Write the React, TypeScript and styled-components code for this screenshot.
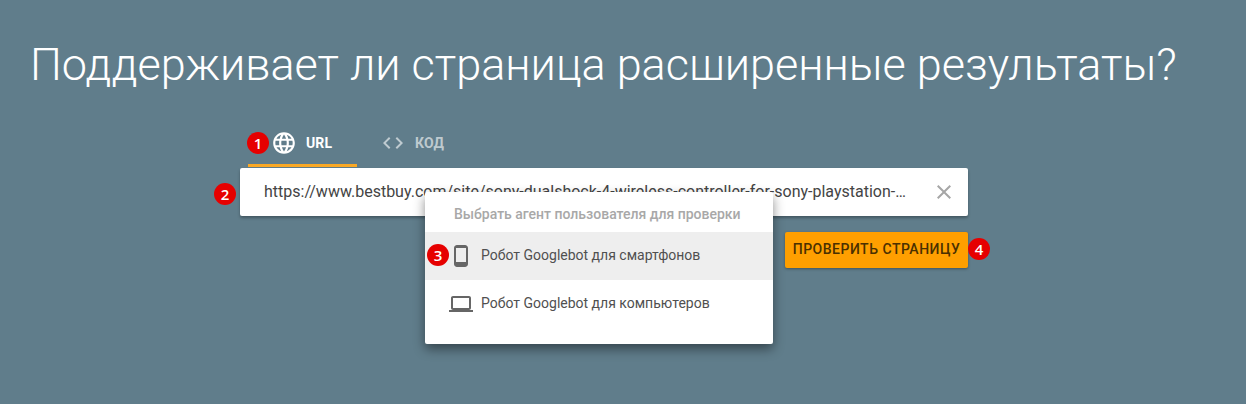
import styled, { createGlobalStyle } from 'styled-components'

const GlobalStyle = createGlobalStyle`
  html, body {
    margin: 0;
    padding: 0;
    background: #607d8b;
    font-family: Roboto, "Liberation Sans", sans-serif;
    overflow: hidden;
  }
`

const Page = styled.div`
  width: 1246px;
  height: 404px;
  background: #607d8b;
  overflow: hidden;
`

const Title = styled.h1`
  margin: 0;
  padding: 37px 0 0 30px;
  font-size: 45px;
  line-height: 56px;
  height: 56px;
  font-weight: 300;
  color: #fff;
  white-space: nowrap;
`

const Form = styled.div`
  position: relative;
  width: 728px;
  margin: 27px 0 0 240px;
`

const Tabs = styled.div`
  display: flex;
  height: 48px;
  padding-left: 8px;
`

const Tab = styled.div<{ $active?: boolean }>`
  display: flex;
  align-items: center;
  gap: ${p => (p.$active ? '9px' : '10px')};
  height: 47px;
  box-sizing: border-box;
  width: 109px;
  padding: 1px 0 0 ${p => (p.$active ? '23px' : '24px')};
  color: ${p => (p.$active ? '#fff' : 'rgba(255,255,255,0.6)')};
  border-bottom: ${p => (p.$active ? '3px solid #f9a825' : '3px solid transparent')};
  font-size: 14px;
  font-weight: 700;
  letter-spacing: 0.1px;
`

const Field = styled.div`
  display: flex;
  align-items: center;
  height: 48px;
  padding: 0 12px 0 24px;
  background: #fff;
  border-radius: 2px;
  box-shadow: 0 2px 3px rgba(0, 0, 0, 0.3);
`

const UrlText = styled.div`
  width: 644px;
  padding-bottom: 1px;
  font-size: 16px;
  color: #444;
  white-space: nowrap;
  overflow: hidden;
  text-overflow: ellipsis;
`

const ClearButton = styled.div`
  display: flex;
  margin-left: auto;
  color: #a6a6a6;
`

const Actions = styled.div`
  display: flex;
  justify-content: flex-end;
  margin-top: 16px;
`

const SubmitButton = styled.div`
  display: flex;
  align-items: center;
  justify-content: center;
  width: 183px;
  height: 36px;
  padding-bottom: 2px;
  box-sizing: border-box;
  background: #ff9f00;
  color: #4a3000;
  border-radius: 2px;
  font-size: 14px;
  font-weight: 500;
  letter-spacing: 0.5px;
  box-shadow: 0 1px 3px rgba(0, 0, 0, 0.35);
`

const Menu = styled.div`
  position: absolute;
  left: 185px;
  top: 72px;
  width: 348px;
  height: 152px;
  padding-bottom: 16px;
  box-sizing: border-box;
  background: #fff;
  border-radius: 2px;
  box-shadow: 0 5px 12px rgba(0, 0, 0, 0.45);
`

const MenuHeader = styled.div`
  height: 40px;
  padding: 14px 0 0 29px;
  box-sizing: border-box;
  font-size: 14px;
  line-height: 16px;
  font-weight: 500;
  color: #a8a8a8;
`

const MenuItem = styled.div<{ $selected?: boolean }>`
  display: flex;
  align-items: center;
  height: 48px;
  padding-left: 24px;
  gap: 8px;
  background: ${p => (p.$selected ? '#eeeeee' : 'transparent')};
  font-size: 14px;
  color: #505050;
`

const MenuLabel = styled.span`
  padding-bottom: 2px;
`

const MenuIcon = styled.div`
  display: flex;
  justify-content: center;
  width: 24px;
  color: #666;
`

const Badge = styled.div<{ $left: number; $top: number }>`
  position: absolute;
  left: ${p => p.$left}px;
  top: ${p => p.$top}px;
  display: flex;
  align-items: center;
  justify-content: center;
  width: 22px;
  height: 22px;
  border-radius: 50%;
  background: #e60000;
  color: #fff;
  font-family: "Open Sans", Roboto, sans-serif;
  font-size: 15px;
  font-weight: 600;
`

const GlobeIcon = () => (
  <svg width="26" height="26" viewBox="0 0 24 24" fill="currentColor">
    <path d="M11.99 2C6.47 2 2 6.48 2 12s4.47 10 9.99 10C17.52 22 22 17.52 22 12S17.52 2 11.99 2zm6.93 6h-2.95c-.32-1.25-.78-2.45-1.38-3.56 1.84.63 3.37 1.91 4.33 3.56zM12 4.04c.83 1.2 1.48 2.53 1.91 3.96h-3.82c.43-1.43 1.08-2.76 1.91-3.96zM4.26 14C4.1 13.36 4 12.69 4 12s.1-1.36.26-2h3.38c-.08.66-.14 1.32-.14 2 0 .68.06 1.34.14 2H4.26zm.82 2h2.95c.32 1.25.78 2.45 1.38 3.56-1.84-.63-3.37-1.9-4.33-3.56zm2.95-8H5.08c.96-1.66 2.49-2.93 4.33-3.56C8.81 5.55 8.35 6.75 8.03 8zM12 19.96c-.83-1.2-1.48-2.53-1.91-3.96h3.82c-.43 1.43-1.08 2.76-1.91 3.96zM14.34 14H9.66c-.09-.66-.16-1.32-.16-2 0-.68.07-1.35.16-2h4.68c.09.65.16 1.32.16 2 0 .68-.07 1.34-.16 2zm.25 5.56c.6-1.11 1.06-2.31 1.38-3.56h2.95c-.96 1.65-2.49 2.93-4.33 3.56zM16.36 14c.08-.66.14-1.32.14-2 0-.68-.06-1.34-.14-2h3.38c.16.64.26 1.31.26 2s-.1 1.36-.26 2h-3.38z" />
  </svg>
)

const CodeIcon = () => (
  <svg width="24" height="24" viewBox="0 0 24 24" fill="currentColor">
    <path d="M9.4 16.6L4.8 12l4.6-4.6L8 6l-6 6 6 6 1.4-1.4zm5.2 0l4.6-4.6-4.6-4.6L16 6l6 6-6 6-1.4-1.4z" />
  </svg>
)

const CloseIcon = () => (
  <svg width="24" height="24" viewBox="0 0 24 24" fill="currentColor">
    <path d="M19 6.41L17.59 5 12 10.59 6.41 5 5 6.41 10.59 12 5 17.59 6.41 19 12 13.41 17.59 19 19 17.59 13.41 12z" />
  </svg>
)

const PhoneIcon = () => (
  <svg width="24" height="24" viewBox="0 0 24 24" fill="currentColor">
    <path d="M16 1H8C6.34 1 5 2.34 5 4v16c0 1.66 1.34 3 3 3h8c1.66 0 3-1.34 3-3V4c0-1.66-1.34-3-3-3zm1 17H7V4h10v14z" />
  </svg>
)

const LaptopIcon = () => (
  <svg width="24" height="24" viewBox="0 0 24 24" fill="currentColor">
    <path d="M20 18c1.1 0 1.99-.9 1.99-2L22 6c0-1.1-.9-2-2-2H4c-1.1 0-2 .9-2 2v10c0 1.1.9 2 2 2H0v2h24v-2h-4zM4 6h16v10H4V6z" />
  </svg>
)

export default function App() {
  return (
    <Page>
      <GlobalStyle />
      <Title>Поддерживает ли страница расширенные результаты?</Title>
      <Form>
        <Tabs>
          <Tab $active>
            <GlobeIcon />
            URL
          </Tab>
          <Tab>
            <CodeIcon />
            КОД
          </Tab>
        </Tabs>
        <Field>
          <UrlText>https://www.bestbuy.com/site/sony-dualshock-4-wireless-controller-for-sony-playstation-4-black/5767900.p</UrlText>
          <ClearButton>
            <CloseIcon />
          </ClearButton>
        </Field>
        <Actions>
          <SubmitButton>ПРОВЕРИТЬ СТРАНИЦУ</SubmitButton>
        </Actions>
        <Menu>
          <MenuHeader>Выбрать агент пользователя для проверки</MenuHeader>
          <MenuItem $selected>
            <MenuIcon>
              <PhoneIcon />
            </MenuIcon>
            <MenuLabel>Робот Googlebot для смартфонов</MenuLabel>
          </MenuItem>
          <MenuItem>
            <MenuIcon>
              <LaptopIcon />
            </MenuIcon>
            <MenuLabel>Робот Googlebot для компьютеров</MenuLabel>
          </MenuItem>
        </Menu>
        <Badge $left={7} $top={12}>1</Badge>
        <Badge $left={-26} $top={63}>2</Badge>
        <Badge $left={187} $top={124}>3</Badge>
        <Badge $left={728} $top={118}>4</Badge>
      </Form>
    </Page>
  )
}
